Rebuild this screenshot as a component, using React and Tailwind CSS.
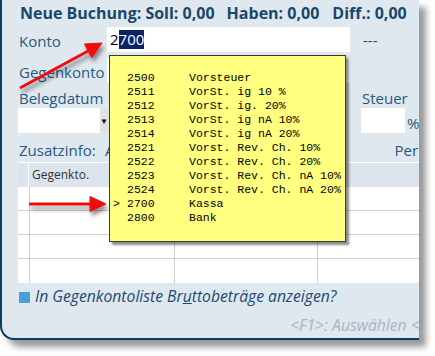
import React from "react";

const rows = [
  ["2500", "Vorsteuer"],
  ["2511", "VorSt. ig 10 %"],
  ["2512", "VorSt. ig. 20%"],
  ["2513", "VorSt. ig nA 10%"],
  ["2514", "VorSt. ig nA 20%"],
  ["2521", "Vorst. Rev. Ch. 10%"],
  ["2522", "Vorst. Rev. Ch. 20%"],
  ["2523", "Vorst. Rev. Ch. nA 10%"],
  ["2524", "Vorst. Rev. Ch. nA 20%"],
  ["2700", "Kassa", true],
  ["2800", "Bank"],
];

const Popup = () => (
  <div className="absolute left-[109px] top-[55px] w-[237px] h-[187px] bg-[#ffff80] border border-[#3a3a3a] shadow-[3px_3px_2px_rgba(0,0,0,0.45)] pt-[15px] pl-[3px] font-['Liberation_Mono',monospace] text-[11.5px] leading-[14px] text-black">
    {rows.map(([nr, name, sel]) => (
      <div key={nr} className="flex whitespace-pre">
        <span className="w-[14px]">{sel ? ">" : ""}</span>
        <span className="w-[62px]">{nr}</span>
        <span>{name}</span>
      </div>
    ))}
  </div>
);

const Arrows = () => (
  <svg className="absolute left-0 top-0 pointer-events-none" width="435" height="356">
    <defs>
      <filter id="sh" x="-20%" y="-50%" width="160%" height="250%">
        <feDropShadow dx="2" dy="4" stdDeviation="2" floodColor="#000" floodOpacity="0.45" />
      </filter>
    </defs>
    <g filter="url(#sh)" fill="#ee1111" stroke="#ee1111">
      <line x1="20" y1="88" x2="89" y2="50.5" strokeWidth="3" />
      <polygon points="102,43 91.8,57.5 84.4,44" strokeWidth="1" />
      <line x1="29" y1="204" x2="92" y2="204" strokeWidth="3" />
      <polygon points="106,204 90,196.5 90,211.5" strokeWidth="1" />
    </g>
  </svg>
);

const App = () => {
  return (
    <div className="relative w-[435px] h-[356px] bg-white overflow-hidden font-['Open_Sans',sans-serif]">
      <div className="w-[419px] h-[340px] bg-[#dfe7ef] border-l-2 border-b-2 border-[#0b3d63] rounded-bl-[14px] shadow-[7px_7px_6px_rgba(0,0,0,0.4)] overflow-hidden pl-[16px]">
        <div className="pt-[3px] pl-[2px] flex text-[16px] leading-[20px] font-bold text-[#17476c] whitespace-pre">
          <span>Neue Buchung: Soll: 0,00</span>
          <span className="ml-[12px]">Haben: 0,00</span>
          <span className="ml-[13px]">Diff.: 0,00</span>
        </div>

        <div className="mt-[4px] flex h-[25px] items-center text-[15px] text-[#265a82]">
          <span className="w-[89px] shrink-0 pl-[1px] pt-[4px]">Konto</span>
          <div className="w-[243px] shrink-0 h-[25px] bg-white pl-[3px] flex items-center text-black">
            <span>2</span>
            <span className="bg-[#0a246a] text-white leading-[19px]">700</span>
          </div>
          <span className="ml-[13px] pt-[2px] text-[#444]">---</span>
        </div>

        <div className="mt-[6px] flex h-[25px] items-center text-[15px] text-[#265a82]">
          <span className="w-[89px] shrink-0 pl-[1px] pt-[4px]">Gegenkonto</span>
          <div className="w-[243px] shrink-0 h-[25px] bg-white" />
        </div>

        <div className="mt-[5px] flex h-[20px] items-center text-[15px] leading-[20px] text-[#265a82]">
          <span className="w-[344px] shrink-0 pl-[1px]">Belegdatum</span>
          <span>Steuer</span>
        </div>

        <div className="flex h-[25px] items-center overflow-hidden">
          <div className="w-[90px] shrink-0 h-[25px] bg-white flex justify-end">
            <div className="w-[8px] h-[25px] bg-[#e2e2e2] flex items-center justify-center text-[8px] text-black">▼</div>
          </div>
          <div className="ml-[253px] shrink-0 w-[44px] h-[25px] bg-white" />
          <span className="ml-[2px] shrink-0 pt-[6px] text-[15px] text-[#265a82]">%</span>
          <div className="ml-[4px] shrink-0 w-[20px] h-[25px] bg-white" />
        </div>

        <div className="mt-[7px] flex h-[20px] items-center text-[15px] leading-[20px] text-[#265a82]">
          <span className="w-[87px] shrink-0 pl-[1px]">Zusatzinfo:</span>
          <span>A</span>
          <span className="ml-[280px]">Per</span>
        </div>

        <div className="mt-[2px] h-[121px] bg-white flex flex-col">
          <div className="h-[25px] border-t border-white bg-[#dce4ed] flex text-[12px] text-[#333]">
            <div className="w-[11px] border-r border-white" />
            <div className="w-[145px] pl-[3px] flex items-center">Gegenkto.</div>
          </div>
          {[0, 1, 2, 3].map((i) => (
            <div key={i} className={`h-[24px] flex ${i < 3 ? "border-b border-[#d6cfc8]" : ""}`}>
              <div className="w-[12px] border-r border-[#d6cfc8]" />
              <div className="w-[145px] border-r border-[#d6cfc8]" />
              <div className="w-[143px] border-r border-[#d6cfc8]" />
            </div>
          ))}
        </div>

        <div className="mt-[7px] flex items-center h-[14px]">
          <div className="w-[11px] h-[11px] bg-[#4a9fd8] ml-[1px]" />
          <span className="ml-[5px] text-[15.7px] italic text-[#1c4a70] whitespace-nowrap">
            In Gegenkontoliste Br<span className="underline">u</span>ttobeträge anzeigen?
          </span>
        </div>

        <div className="mt-[11px] pl-[272px] text-[15.7px] italic text-[#a9b5c2] whitespace-nowrap leading-[20px]">
          &lt;F1&gt;: Auswählen &lt;
        </div>
      </div>

      <Popup />
      <Arrows />
    </div>
  );
};

export default App;
